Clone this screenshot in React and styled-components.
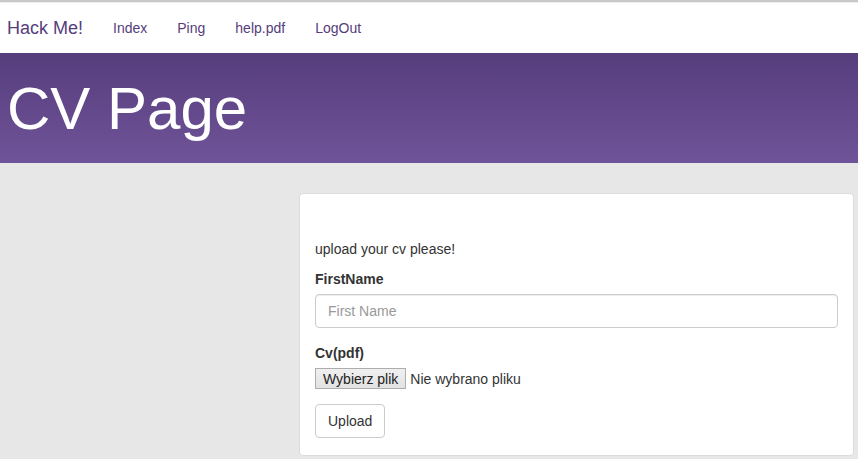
import styled, { createGlobalStyle } from "styled-components";

const GlobalStyle = createGlobalStyle`
    html, body {
        margin: 0;
        padding: 0;
        background-color: #e7e7e7;
        font-family: "Liberation Sans", Arial, sans-serif;
        font-size: 14px;
        line-height: 20px;
        color: #333;
    }
    * {
        box-sizing: border-box;
    }
`

const TopEdge = styled.div`
    height: 3px;
    background: linear-gradient(to bottom, #c8c8c8 0, #c8c8c8 66%, #ececec 66%);
`

const Navbar = styled.nav`
    height: 50px;
    background-color: #fff;
    display: flex;
    align-items: center;
    padding-left: 7px;
`

const Brand = styled.a`
    font-size: 18px;
    color: #563d7c;
    padding-right: 15px;
    text-decoration: none;
`

const NavLink = styled.a`
    font-size: 14px;
    color: #563d7c;
    padding: 0 15px;
    text-decoration: none;
    cursor: pointer;
`

const Header = styled.header`
    height: 110px;
    background: linear-gradient(to bottom, #563d7c 0, #6f5499 100%);
    display: flex;
    align-items: center;
    padding-left: 7px;
`

const Title = styled.h1`
    margin: 0;
    font-size: 60px;
    font-weight: normal;
    color: #fff;
    line-height: 1;
    padding-top: 1px;
`

const Main = styled.main`
    display: grid;
    grid-template-columns: 299px 555px;
    padding-top: 30px;
`

const Panel = styled.div`
    grid-column: 2;
    background-color: #fff;
    border: 1px solid #dcdcdc;
    border-radius: 4px;
    padding: 45px 15px 17px;
`

const Intro = styled.p`
    margin: 0 0 10px;
`

const FormGroup = styled.div`
    margin-bottom: 15px;
`

const Label = styled.label`
    display: block;
    font-weight: bold;
    margin-bottom: 5px;
`

const Input = styled.input`
    display: block;
    width: 100%;
    height: 34px;
    padding: 6px 12px;
    font-family: inherit;
    font-size: 14px;
    color: #555;
    border: 1px solid #ccc;
    border-radius: 4px;
    box-shadow: inset 0 1px 1px rgba(0, 0, 0, 0.075);
    &::placeholder {
        color: #999;
    }
    &:focus {
        outline: none;
    }
`

const FileRow = styled.div`
    display: flex;
    align-items: center;
    height: 21px;
    gap: 4px;
`

const FileButton = styled.button`
    height: 21px;
    padding: 0 7px;
    font-family: inherit;
    font-size: 14px;
    color: #222;
    background: linear-gradient(to bottom, #f0f0f0, #e2e2e2);
    border: 1px solid #adadad;
    border-radius: 0;
`

const FileName = styled.span`
    color: #333;
`

const Button = styled.button`
    height: 34px;
    padding: 6px 12px;
    font-family: inherit;
    font-size: 14px;
    color: #333;
    background-color: #fff;
    border: 1px solid #ccc;
    border-radius: 4px;
    cursor: pointer;
`

export default function App() {
    return (
        <>
            <GlobalStyle />
            <TopEdge />
            <Navbar>
                <Brand>Hack Me!</Brand>
                <NavLink>Index</NavLink>
                <NavLink>Ping</NavLink>
                <NavLink>help.pdf</NavLink>
                <NavLink>LogOut</NavLink>
            </Navbar>
            <Header>
                <Title>CV Page</Title>
            </Header>
            <Main>
                <Panel>
                    <Intro>upload your cv please!</Intro>
                    <FormGroup>
                        <Label>FirstName</Label>
                        <Input type="text" placeholder="First Name" />
                    </FormGroup>
                    <FormGroup>
                        <Label>Cv(pdf)</Label>
                        <FileRow>
                            <FileButton type="button">Wybierz plik</FileButton>
                            <FileName>Nie wybrano pliku</FileName>
                        </FileRow>
                    </FormGroup>
                    <Button type="button">Upload</Button>
                </Panel>
            </Main>
        </>
    )
}
